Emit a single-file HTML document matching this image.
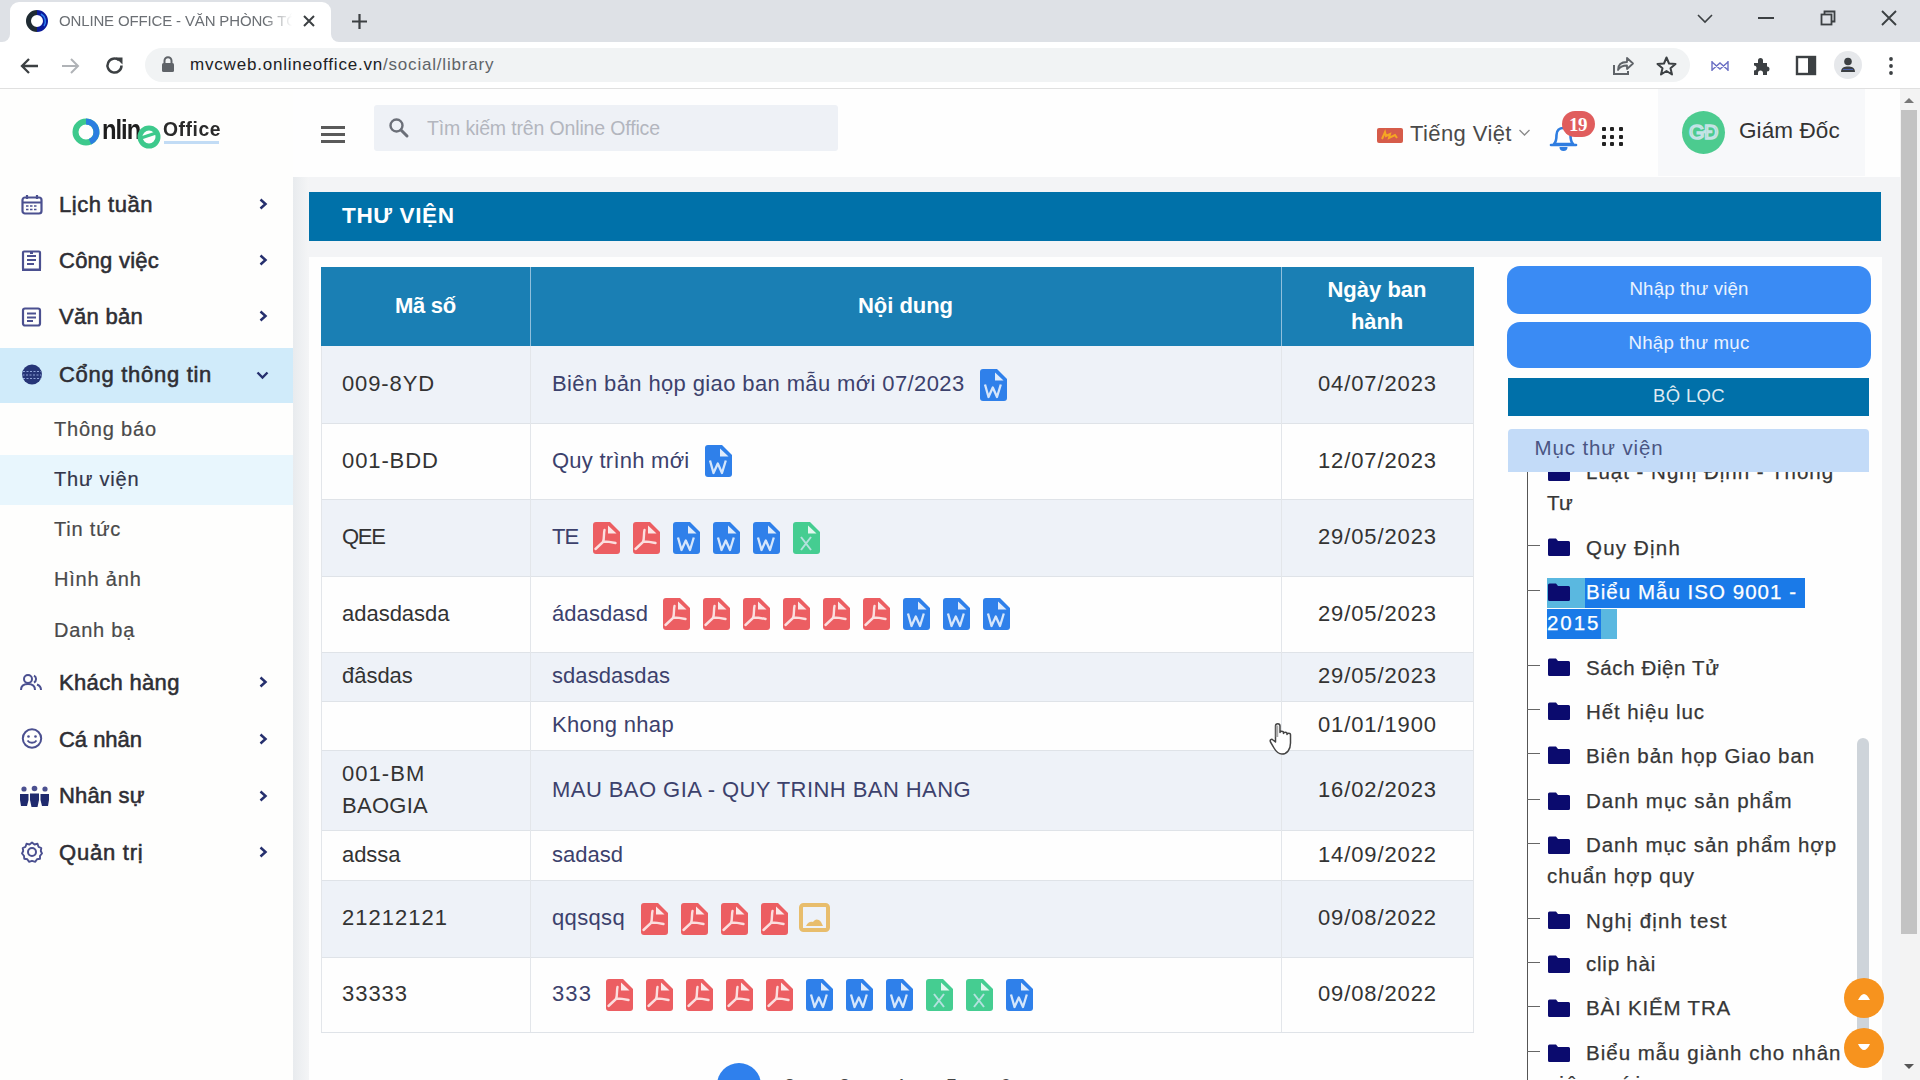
<!DOCTYPE html>
<html><head><meta charset="utf-8">
<style>
*{margin:0;padding:0;box-sizing:border-box}
html,body{width:1920px;height:1080px;overflow:hidden;background:#f3f4f6;font-family:"Liberation Sans",sans-serif}
.a{position:absolute}
.t{position:absolute;white-space:nowrap;line-height:1}
svg{overflow:visible}
</style></head><body>

<div class="a" style="left:0px;top:0px;width:1920px;height:42px;background:#dee1e6;"></div>
<div class="a" style="left:10px;top:2px;width:321px;height:40px;background:#fff;border-radius:9px 9px 0 0"></div>
<div class="a" style="left:2px;top:34px;width:8px;height:8px;background:#fff;"></div>
<div class="a" style="left:2px;top:34px;width:8px;height:8px;background:#dee1e6;border-bottom-right-radius:8px"></div>
<div class="a" style="left:331px;top:34px;width:8px;height:8px;background:#fff;"></div>
<div class="a" style="left:331px;top:34px;width:8px;height:8px;background:#dee1e6;border-bottom-left-radius:8px"></div>
<div class="a" style="left:0px;top:42px;width:1920px;height:46px;background:#fff;"></div>
<div class="a" style="left:0px;top:88px;width:1920px;height:1px;background:#e0e0e0;"></div>
<div class="a" style="left:145px;top:48px;width:1545px;height:34px;background:#f1f3f4;border-radius:17px"></div>
<!-- tab contents -->
<svg class="a" style="left:25px;top:9px" width="24" height="24" viewBox="0 0 24 24"><path d="M12 3.5A8.5 8.5 0 0 0 12 20.5" fill="none" stroke="#1f2b33" stroke-width="5"/><path d="M12 3.5A8.5 8.5 0 0 1 12 20.5" fill="none" stroke="#0b1a9a" stroke-width="5"/><path d="M16 5A8.5 8.5 0 0 1 19 17" fill="none" stroke="#2d7ff0" stroke-width="1.5"/></svg>
<div class="t" style="left:59px;top:13px;font-size:15px;color:#6b6f74;letter-spacing:-0.15px;width:233px;overflow:hidden;-webkit-mask-image:linear-gradient(90deg,#000 88%,transparent 100%)">ONLINE OFFICE - VĂN PHÒNG TỔNG HỢP</div>
<svg class="a" style="left:302px;top:14px" width="14" height="14" viewBox="0 0 14 14"><path d="M2 2L12 12M12 2L2 12" stroke="#3c4043" stroke-width="2"/></svg>
<svg class="a" style="left:351px;top:13px" width="17" height="17" viewBox="0 0 17 17"><path d="M8.5 1V16M1 8.5H16" stroke="#3c4043" stroke-width="2.2"/></svg>
<!-- window controls -->
<svg class="a" style="left:1696px;top:12px" width="18" height="12" viewBox="0 0 18 12"><path d="M2 3L9 10L16 3" fill="none" stroke="#3c4043" stroke-width="1.6"/></svg>
<div class="a" style="left:1758px;top:17px;width:16px;height:2px;background:#3c4043"></div>
<svg class="a" style="left:1819px;top:9px" width="18" height="18" viewBox="0 0 18 18"><rect x="2.5" y="5.5" width="10" height="10" fill="none" stroke="#3c4043" stroke-width="1.8"/><path d="M5.5 5.5V2.5H15.5V12.5H12.5" fill="none" stroke="#3c4043" stroke-width="1.8"/></svg>
<svg class="a" style="left:1880px;top:9px" width="18" height="18" viewBox="0 0 18 18"><path d="M2 2L16 16M16 2L2 16" stroke="#3c4043" stroke-width="1.9"/></svg>
<!-- nav -->
<svg class="a" style="left:18px;top:55px" width="22" height="22" viewBox="0 0 22 22"><path d="M20 11H4M11 4L4 11L11 18" fill="none" stroke="#3c4043" stroke-width="2.3"/></svg>
<svg class="a" style="left:60px;top:55px" width="22" height="22" viewBox="0 0 22 22"><path d="M2 11H18M11 4L18 11L11 18" fill="none" stroke="#b0b3b7" stroke-width="2"/></svg>
<svg class="a" style="left:103px;top:54px" width="23" height="23" viewBox="0 0 23 23"><path d="M18.5 11.5A7 7 0 1 1 16 6.2" fill="none" stroke="#3c4043" stroke-width="2.5"/><path d="M12.5 3.5H19.5V10.5Z" fill="#3c4043"/></svg>
<svg class="a" style="left:161px;top:56px" width="14" height="16" viewBox="0 0 14 16"><path d="M3.5 7V4.8A3.5 3.5 0 0 1 10.5 4.8V7" fill="none" stroke="#5f6368" stroke-width="2"/><rect x="1" y="7" width="12" height="9" rx="1.5" fill="#5f6368"/></svg>
<div class="t" style="left:190px;top:56px;font-size:17px;color:#202124;letter-spacing:0.8px">mvcweb.onlineoffice.vn<span style="color:#5f6368">/social/library</span></div>
<!-- right toolbar icons -->
<svg class="a" style="left:1612px;top:55px" width="24" height="22" viewBox="0 0 24 22"><path d="M2 10V19H16V16" fill="none" stroke="#5f6368" stroke-width="2"/><path d="M6 15C6 9 10 7 15 7V3L21 8.5L15 14V10.5C11 10.5 8 11.5 6 15Z" fill="none" stroke="#5f6368" stroke-width="1.8" stroke-linejoin="round"/></svg>
<svg class="a" style="left:1655px;top:55px" width="23" height="22" viewBox="0 0 23 22"><path d="M11.5 2.5L14 8.5L20.5 9L15.5 13.2L17 19.5L11.5 16L6 19.5L7.5 13.2L2.5 9L9 8.5Z" fill="none" stroke="#3c4043" stroke-width="2" stroke-linejoin="round"/></svg>
<svg class="a" style="left:1710px;top:59px" width="20" height="14" viewBox="0 0 20 14"><path d="M2 2V12M18 2V12M2 3L10 10L18 3M2 11L10 4L18 11" fill="none" stroke="#6b6fc4" stroke-width="1.4"/></svg>
<svg class="a" style="left:1751px;top:55px" width="24" height="22" viewBox="0 0 24 22"><path d="M3 8H7V5.5A2.5 2.5 0 0 1 12 5.5V8H16V11.5A2.5 2.5 0 0 1 16 16.5V20H12V18A2.5 2.5 0 0 0 7 18V20H3V15.5A2.5 2.5 0 0 0 3 10.5Z" fill="#3c4043"/></svg>
<svg class="a" style="left:1795px;top:55px" width="22" height="21" viewBox="0 0 22 21"><rect x="2" y="2" width="18" height="17" fill="none" stroke="#3c4043" stroke-width="2.4"/><rect x="13" y="2" width="7" height="17" fill="#3c4043"/></svg>
<div class="a" style="left:1834px;top:51px;width:28px;height:28px;border-radius:50%;background:#e6e8eb"></div>
<svg class="a" style="left:1838px;top:55px" width="20" height="20" viewBox="0 0 20 20"><circle cx="10" cy="6.5" r="3.8" fill="#3c4043"/><path d="M3 17C3 12.5 6.5 11.5 10 11.5S17 12.5 17 17Z" fill="#3c4043"/><path d="M5 14.5H15" stroke="#4a5fa8" stroke-width="1"/></svg>
<svg class="a" style="left:1887px;top:56px" width="8" height="20" viewBox="0 0 8 20"><circle cx="4" cy="3" r="1.9" fill="#3c4043"/><circle cx="4" cy="10" r="1.9" fill="#3c4043"/><circle cx="4" cy="17" r="1.9" fill="#3c4043"/></svg>


<div class="a" style="left:0px;top:89px;width:293px;height:991px;background:#fefefd;"></div>
<div class="a" style="left:293px;top:89px;width:1607px;height:88px;background:#fefefe;"></div>
<div class="a" style="left:293px;top:177px;width:16px;height:903px;background:#f1f2f4;background:linear-gradient(90deg,#e8ebee,#f4f5f6)"></div>
<div class="a" style="left:1658px;top:89px;width:207px;height:87px;background:#f7f8fa;"></div>
<div class="a" style="left:1900px;top:89px;width:20px;height:991px;background:#f3f3f3;"></div>
<div class="a" style="left:1901px;top:110px;width:16px;height:824px;background:#c3c3c3;"></div>
<svg class="a" style="left:1903px;top:95px" width="12" height="10" viewBox="0 0 12 10"><path d="M1 8L6 3L11 8Z" fill="#777"/></svg>
<svg class="a" style="left:1903px;top:1062px" width="12" height="10" viewBox="0 0 12 10"><path d="M1 2L6 7L11 2Z" fill="#555"/></svg>
<div class="a" style="left:309px;top:192px;width:1572px;height:49px;background:#0071a9;"></div>
<div class="a" style="left:309px;top:257px;width:1573px;height:823px;background:#fefefe;"></div>
<svg class="a" style="left:72px;top:118px" width="28" height="28" viewBox="0 0 28 28"><circle cx="14" cy="14" r="10.5" fill="none" stroke="#3dc98c" stroke-width="6"/><path d="M14 3.5A10.5 10.5 0 0 1 18 23.7" fill="none" stroke="#2a7ee0" stroke-width="6"/></svg>
<div class="t" style="left:102px;top:116.3px;font-size:28px;color:#1e1e1e;font-weight:bold;letter-spacing:-1.2px;transform:scaleX(0.85);transform-origin:left">nlin</div>
<svg class="a" style="left:137px;top:125px" width="24" height="24" viewBox="0 0 24 24"><circle cx="12" cy="12" r="9" fill="none" stroke="#3dc98c" stroke-width="5"/><path d="M4 13L19 8" stroke="#3dc98c" stroke-width="3"/></svg>
<div class="t" style="left:163px;top:118.2px;font-size:21px;color:#2a2a2a;font-weight:bold;letter-spacing:0.6px;transform:scaleX(0.92);transform-origin:left">Office</div>
<div class="a" style="left:164px;top:141px;width:55px;height:3px;background:#8fc0ee;opacity:.55"></div>
<div class="a" style="left:321px;top:126px;width:24px;height:3px;background:#5a5a5a;"></div>
<div class="a" style="left:321px;top:133px;width:24px;height:3px;background:#5a5a5a;"></div>
<div class="a" style="left:321px;top:140px;width:24px;height:3px;background:#5a5a5a;"></div>
<div class="a" style="left:374px;top:105px;width:464px;height:46px;background:#eef1f6;border-radius:3px"></div>
<svg class="a" style="left:388px;top:117px" width="22" height="22" viewBox="0 0 22 22"><circle cx="8.5" cy="8.5" r="6" fill="none" stroke="#6b6f78" stroke-width="2.4"/><path d="M13 13L19 19" stroke="#6b6f78" stroke-width="3" stroke-linecap="round"/></svg>
<div class="t" style="left:427px;top:118.5px;font-size:19.5px;color:#b3b6be;font-weight:normal;letter-spacing:-0.15px;">Tìm kiếm trên Online Office</div>
<div class="a" style="left:1377px;top:128px;width:26px;height:15px;background:#d65c4a;border-radius:2px"></div>
<svg class="a" style="left:1380px;top:130px" width="20" height="11" viewBox="0 0 20 11"><path d="M2 9L5 2L6 6L10 4L9 8L15 5L17 8" fill="none" stroke="#f5a623" stroke-width="2"/></svg>
<div class="t" style="left:1410px;top:123.4px;font-size:22px;color:#4a4a4a;font-weight:normal;letter-spacing:0.4px;">Tiếng Việt</div>
<svg class="a" style="left:1518px;top:128px" width="13" height="9" viewBox="0 0 13 9"><path d="M1.5 2L6.5 7L11.5 2" fill="none" stroke="#8a8a8a" stroke-width="1.3"/></svg>
<svg class="a" style="left:1549px;top:124px" width="30" height="28" viewBox="0 0 30 28"><path d="M5 20C7 18 7.5 15 7.5 11C7.5 6.5 10.5 4 14.5 4S21.5 6.5 21.5 11C21.5 15 22 18 24 20Z" fill="none" stroke="#2f7de0" stroke-width="2.6" stroke-linejoin="round"/><path d="M2 21H27" stroke="#2f7de0" stroke-width="2.6" stroke-linecap="round"/><path d="M10.5 23A4 4 0 0 0 18.5 23Z" fill="#2f7de0"/></svg>
<div class="a" style="left:1562px;top:111px;width:33px;height:26px;background:#e05d5d;border-radius:13px"></div>
<div class="t" style="left:1278px;width:600px;text-align:center;top:114.9px;font-size:19px;color:#fff;font-weight:bold;letter-spacing:-0.5px;font-family:'Liberation Serif'">19</div>
<div class="a" style="left:1601.5px;top:127.0px;width:4px;height:4px;background:#222;border-radius:1px"></div>
<div class="a" style="left:1610.0px;top:127.0px;width:4px;height:4px;background:#222;border-radius:1px"></div>
<div class="a" style="left:1618.5px;top:127.0px;width:4px;height:4px;background:#222;border-radius:1px"></div>
<div class="a" style="left:1601.5px;top:134.5px;width:4px;height:4px;background:#222;border-radius:1px"></div>
<div class="a" style="left:1610.0px;top:134.5px;width:4px;height:4px;background:#222;border-radius:1px"></div>
<div class="a" style="left:1618.5px;top:134.5px;width:4px;height:4px;background:#222;border-radius:1px"></div>
<div class="a" style="left:1601.5px;top:142.0px;width:4px;height:4px;background:#222;border-radius:1px"></div>
<div class="a" style="left:1610.0px;top:142.0px;width:4px;height:4px;background:#222;border-radius:1px"></div>
<div class="a" style="left:1618.5px;top:142.0px;width:4px;height:4px;background:#222;border-radius:1px"></div>
<div class="a" style="left:1682px;top:111px;width:43px;height:43px;border-radius:50%;background:#4ccb8f"></div>
<div class="t" style="left:1403.5px;width:600px;text-align:center;top:122.1px;font-size:20px;color:transparent;font-weight:normal;letter-spacing:-0.5px;-webkit-text-stroke:1.6px #c5e3e6">GĐ</div>
<div class="t" style="left:1739px;top:120.0px;font-size:22.5px;color:#333;font-weight:normal;letter-spacing:0.1px;">Giám Đốc</div>
<div class="a" style="left:0px;top:348px;width:293px;height:55px;background:#d0ebfa;"></div>
<div class="a" style="left:0px;top:455px;width:293px;height:50px;background:#e8f6fd;"></div>
<div class="t" style="left:59px;top:194.2px;font-size:22px;color:#2e2e34;font-weight:normal;letter-spacing:0.52px;-webkit-text-stroke:0.55px #2e2e34">Lịch tuần</div>
<svg class="a" style="left:21px;top:194px" width="22" height="22" viewBox="0 0 22 22"><rect x="1.5" y="3.5" width="19" height="16" rx="2.5" fill="none" stroke="#4b5090" stroke-width="2.2"/><path d="M1.5 8.5H20.5M6 1V5M16 1V5" stroke="#4b5090" stroke-width="2.2"/><path d="M5 12H17M5 15.5H17" stroke="#4b5090" stroke-width="1.6" stroke-dasharray="2.5 1.5"/></svg>
<svg class="a" style="left:259px;top:198px" width="9" height="12" viewBox="0 0 9 12"><path d="M1.5 1.5L6.5 6L1.5 10.5" fill="none" stroke="#26306e" stroke-width="2.5"/></svg>
<div class="t" style="left:59px;top:249.9px;font-size:22px;color:#2e2e34;font-weight:normal;letter-spacing:0.24px;-webkit-text-stroke:0.55px #2e2e34">Công việc</div>
<svg class="a" style="left:21px;top:250px" width="22" height="22" viewBox="0 0 22 22"><rect x="2" y="1.5" width="17" height="18" rx="1" fill="none" stroke="#4b5090" stroke-width="2.2"/><path d="M6 6H15M6 10H15M6 14H13M1 20H20" stroke="#4b5090" stroke-width="1.8"/><path d="M9 3H12" stroke="#4b5090" stroke-width="2"/></svg>
<svg class="a" style="left:259px;top:254px" width="9" height="12" viewBox="0 0 9 12"><path d="M1.5 1.5L6.5 6L1.5 10.5" fill="none" stroke="#26306e" stroke-width="2.5"/></svg>
<div class="t" style="left:59px;top:306.0px;font-size:22px;color:#2e2e34;font-weight:normal;letter-spacing:0.29px;-webkit-text-stroke:0.55px #2e2e34">Văn bản</div>
<svg class="a" style="left:21px;top:307px" width="22" height="22" viewBox="0 0 22 22"><rect x="2" y="1.5" width="17" height="17" rx="2" fill="none" stroke="#4b5090" stroke-width="2.2"/><path d="M6 6.5H15M6 10.5H15M6 14H12" stroke="#4b5090" stroke-width="2"/></svg>
<svg class="a" style="left:259px;top:310px" width="9" height="12" viewBox="0 0 9 12"><path d="M1.5 1.5L6.5 6L1.5 10.5" fill="none" stroke="#26306e" stroke-width="2.5"/></svg>
<div class="t" style="left:59px;top:363.9px;font-size:22px;color:#2e2e34;font-weight:normal;letter-spacing:0.71px;-webkit-text-stroke:0.55px #2e2e34">Cổng thông tin</div>
<svg class="a" style="left:21px;top:364px" width="22" height="22" viewBox="0 0 22 22"><circle cx="11" cy="10.5" r="10" fill="#263577"/><path d="M2 7.5H20M1.5 11H20.5M2 14.5H20" stroke="#8fa3d8" stroke-width="1" stroke-dasharray="2 1.5"/><path d="M11 1V20" stroke="#263577" stroke-width="0"/>#4b5090#4b5090</svg>
<svg class="a" style="left:256px;top:371px" width="13" height="9" viewBox="0 0 13 9"><path d="M1.5 1.5L6.5 6.5L11.5 1.5" fill="none" stroke="#26306e" stroke-width="2.4"/></svg>
<div class="t" style="left:59px;top:672.0px;font-size:22px;color:#2e2e34;font-weight:normal;letter-spacing:0.33px;-webkit-text-stroke:0.55px #2e2e34">Khách hàng</div>
<svg class="a" style="left:20px;top:673px" width="22" height="22" viewBox="0 0 22 22"><circle cx="8" cy="6" r="4" fill="none" stroke="#4b5090" stroke-width="2"/><path d="M1 17C1 12.5 4 11 8 11S15 12.5 15 17" fill="none" stroke="#4b5090" stroke-width="2"/><path d="M14 2.5A4 4 0 0 1 14 9.5M17 11.5C19.5 12.5 21 14 21 17" fill="none" stroke="#4b5090" stroke-width="2"/></svg>
<svg class="a" style="left:259px;top:676px" width="9" height="12" viewBox="0 0 9 12"><path d="M1.5 1.5L6.5 6L1.5 10.5" fill="none" stroke="#26306e" stroke-width="2.5"/></svg>
<div class="t" style="left:59px;top:729.0px;font-size:22px;color:#2e2e34;font-weight:normal;letter-spacing:-0.03px;-webkit-text-stroke:0.55px #2e2e34">Cá nhân</div>
<svg class="a" style="left:21px;top:728px" width="22" height="22" viewBox="0 0 22 22"><circle cx="11" cy="10.5" r="9.2" fill="none" stroke="#4b5090" stroke-width="2"/><circle cx="7.5" cy="8.5" r="1.3" fill="#4b5090"/><circle cx="14.5" cy="8.5" r="1.3" fill="#4b5090"/><path d="M6.5 12.5C8.5 15.5 13.5 15.5 15.5 12.5" fill="none" stroke="#4b5090" stroke-width="1.8"/></svg>
<svg class="a" style="left:259px;top:733px" width="9" height="12" viewBox="0 0 9 12"><path d="M1.5 1.5L6.5 6L1.5 10.5" fill="none" stroke="#26306e" stroke-width="2.5"/></svg>
<div class="t" style="left:59px;top:785.4px;font-size:22px;color:#2e2e34;font-weight:normal;letter-spacing:0.17px;-webkit-text-stroke:0.55px #2e2e34">Nhân sự</div>
<svg class="a" style="left:19px;top:785px" width="22" height="22" viewBox="0 0 22 22"><circle cx="5" cy="4" r="2.6" fill="#4b5090"/><circle cx="15.5" cy="3.5" r="2.8" fill="#4b5090"/><circle cx="26" cy="4" r="2.6" fill="#4b5090"/><path d="M1 9H9.5V15L8 21H2L1 15Z M11 8.5H20V15L18.5 22H12.5L11 15Z M21.5 9H30V15L29 21H23L21.5 15Z" fill="#1f2a6e"/></svg>
<svg class="a" style="left:259px;top:790px" width="9" height="12" viewBox="0 0 9 12"><path d="M1.5 1.5L6.5 6L1.5 10.5" fill="none" stroke="#26306e" stroke-width="2.5"/></svg>
<div class="t" style="left:59px;top:841.8px;font-size:22px;color:#2e2e34;font-weight:normal;letter-spacing:0.77px;-webkit-text-stroke:0.55px #2e2e34">Quản trị</div>
<svg class="a" style="left:21px;top:841px" width="22" height="22" viewBox="0 0 22 22"><circle cx="11" cy="11" r="4" fill="none" stroke="#4b5090" stroke-width="2"/><path d="M11 1.5L13.5 3.5L16.5 2.8L17.5 5.8L20.3 7L19.8 10L21 12.5L19 14.8L19 17.8L16 18.3L14.3 20.8L11 19.8L8 20.8L6.3 18.3L3.3 17.8L3 14.8L1 12.5L2.2 10L1.7 7L4.5 5.8L5.5 2.8L8.5 3.5Z" fill="none" stroke="#4b5090" stroke-width="1.9" stroke-linejoin="round"/></svg>
<svg class="a" style="left:259px;top:846px" width="9" height="12" viewBox="0 0 9 12"><path d="M1.5 1.5L6.5 6L1.5 10.5" fill="none" stroke="#26306e" stroke-width="2.5"/></svg>
<div class="t" style="left:54px;top:419.1px;font-size:20px;color:#4a4a4a;font-weight:normal;letter-spacing:0.8px;-webkit-text-stroke:0.2px #4a4a4a">Thông báo</div>
<div class="t" style="left:54px;top:469.4px;font-size:20px;color:#33364a;font-weight:normal;letter-spacing:0.8px;-webkit-text-stroke:0.2px #33364a">Thư viện</div>
<div class="t" style="left:54px;top:519.1px;font-size:20px;color:#4a4a4a;font-weight:normal;letter-spacing:0.8px;-webkit-text-stroke:0.2px #4a4a4a">Tin tức</div>
<div class="t" style="left:54px;top:569.1px;font-size:20px;color:#4a4a4a;font-weight:normal;letter-spacing:0.8px;-webkit-text-stroke:0.2px #4a4a4a">Hình ảnh</div>
<div class="t" style="left:54px;top:619.5px;font-size:20px;color:#4a4a4a;font-weight:normal;letter-spacing:0.8px;-webkit-text-stroke:0.2px #4a4a4a">Danh bạ</div>
<div class="t" style="left:342px;top:204.7px;font-size:22.6px;color:#fff;font-weight:bold;letter-spacing:0.6px;">THƯ VIỆN</div>
<div class="a" style="left:321px;top:267px;width:1153px;height:79px;background:#1a7fb4;"></div>
<div class="a" style="left:530px;top:267px;width:1px;height:79px;background:#8fbfdc;"></div>
<div class="a" style="left:1281px;top:267px;width:1px;height:79px;background:#8fbfdc;"></div>
<div class="t" style="left:25.5px;width:800px;text-align:center;top:295.4px;font-size:22px;color:#fff;font-weight:bold;letter-spacing:-0.27px;">Mã số</div>
<div class="t" style="left:505.5px;width:800px;text-align:center;top:295.4px;font-size:22px;color:#fff;font-weight:bold;letter-spacing:-0.04px;">Nội dung</div>
<div class="t" style="left:977px;width:800px;text-align:center;top:279.2px;font-size:22px;color:#fff;font-weight:bold;letter-spacing:-0.00px;">Ngày ban</div>
<div class="t" style="left:977px;width:800px;text-align:center;top:311.4px;font-size:22px;color:#fff;font-weight:bold;letter-spacing:-0.14px;">hành</div>
<div class="a" style="left:321px;top:346px;width:1153px;height:77px;background:#eef2f8;"></div>
<div class="a" style="left:321px;top:423px;width:1153px;height:76px;background:#fefefe;"></div>
<div class="a" style="left:321px;top:423px;width:1153px;height:1px;background:#dfe3e8;"></div>
<div class="a" style="left:321px;top:499px;width:1153px;height:77px;background:#eef2f8;"></div>
<div class="a" style="left:321px;top:499px;width:1153px;height:1px;background:#dfe3e8;"></div>
<div class="a" style="left:321px;top:576px;width:1153px;height:76px;background:#fefefe;"></div>
<div class="a" style="left:321px;top:576px;width:1153px;height:1px;background:#dfe3e8;"></div>
<div class="a" style="left:321px;top:652px;width:1153px;height:49px;background:#eef2f8;"></div>
<div class="a" style="left:321px;top:652px;width:1153px;height:1px;background:#dfe3e8;"></div>
<div class="a" style="left:321px;top:701px;width:1153px;height:49px;background:#fefefe;"></div>
<div class="a" style="left:321px;top:701px;width:1153px;height:1px;background:#dfe3e8;"></div>
<div class="a" style="left:321px;top:750px;width:1153px;height:80px;background:#eef2f8;"></div>
<div class="a" style="left:321px;top:750px;width:1153px;height:1px;background:#dfe3e8;"></div>
<div class="a" style="left:321px;top:830px;width:1153px;height:50px;background:#fefefe;"></div>
<div class="a" style="left:321px;top:830px;width:1153px;height:1px;background:#dfe3e8;"></div>
<div class="a" style="left:321px;top:880px;width:1153px;height:77px;background:#eef2f8;"></div>
<div class="a" style="left:321px;top:880px;width:1153px;height:1px;background:#dfe3e8;"></div>
<div class="a" style="left:321px;top:957px;width:1153px;height:75px;background:#fefefe;"></div>
<div class="a" style="left:321px;top:957px;width:1153px;height:1px;background:#dfe3e8;"></div>
<div class="a" style="left:321px;top:1032px;width:1153px;height:1px;background:#dfe3e8;"></div>
<div class="a" style="left:321px;top:346px;width:1px;height:686px;background:#e3e6ea;"></div>
<div class="a" style="left:1473px;top:346px;width:1px;height:686px;background:#e3e6ea;"></div>
<div class="a" style="left:530px;top:346px;width:1px;height:686px;background:#e3e6ea;"></div>
<div class="a" style="left:1281px;top:346px;width:1px;height:686px;background:#e3e6ea;"></div>
<div class="t" style="left:342px;top:373.4px;font-size:22px;color:#333;font-weight:normal;letter-spacing:0.88px;">009-8YD</div>
<div class="t" style="left:552px;top:373.4px;font-size:22px;color:#3c416c;font-weight:normal;letter-spacing:0.38px;">Biên bản họp giao ban mẫu mới 07/2023</div>
<div class="t" style="left:977.5px;width:800px;text-align:center;top:373.4px;font-size:22px;color:#333;font-weight:normal;letter-spacing:0.89px;">04/07/2023</div>
<svg class="a" style="left:980px;top:368.5px" width="27" height="32" viewBox="0 0 27 32"><path d="M3 0H17L27 10V29A3 3 0 0 1 24 32H3A3 3 0 0 1 0 29V3A3 3 0 0 1 3 0Z" fill="#2f80ea"/><path d="M15 3.5V11.5H23.5Z" fill="#fff" opacity=".85"/><path d="M5 15.5L8.5 28L12.8 18.5L17 28L20.8 15.5" fill="none" stroke="#fff" stroke-width="2.3" stroke-linejoin="round" opacity=".8"/></svg>
<div class="t" style="left:342px;top:449.9px;font-size:22px;color:#333;font-weight:normal;letter-spacing:0.89px;">001-BDD</div>
<div class="t" style="left:552px;top:449.9px;font-size:22px;color:#3c416c;font-weight:normal;letter-spacing:0.25px;">Quy trình mới</div>
<div class="t" style="left:977.5px;width:800px;text-align:center;top:449.9px;font-size:22px;color:#333;font-weight:normal;letter-spacing:0.89px;">12/07/2023</div>
<svg class="a" style="left:705px;top:445.0px" width="27" height="32" viewBox="0 0 27 32"><path d="M3 0H17L27 10V29A3 3 0 0 1 24 32H3A3 3 0 0 1 0 29V3A3 3 0 0 1 3 0Z" fill="#2f80ea"/><path d="M15 3.5V11.5H23.5Z" fill="#fff" opacity=".85"/><path d="M5 15.5L8.5 28L12.8 18.5L17 28L20.8 15.5" fill="none" stroke="#fff" stroke-width="2.3" stroke-linejoin="round" opacity=".8"/></svg>
<div class="t" style="left:342px;top:526.4px;font-size:22px;color:#333;font-weight:normal;letter-spacing:-1.29px;">QEE</div>
<div class="t" style="left:552px;top:526.4px;font-size:22px;color:#3c416c;font-weight:normal;letter-spacing:-1.06px;">TE</div>
<div class="t" style="left:977.5px;width:800px;text-align:center;top:526.4px;font-size:22px;color:#333;font-weight:normal;letter-spacing:0.89px;">29/05/2023</div>
<svg class="a" style="left:593px;top:521.5px" width="27" height="32" viewBox="0 0 27 32"><path d="M3 0H17L27 10V29A3 3 0 0 1 24 32H3A3 3 0 0 1 0 29V3A3 3 0 0 1 3 0Z" fill="#ec5e62"/><path d="M15 3.5V11.5H23.5Z" fill="#fff" opacity=".85"/><path d="M11.5 8C10.5 12 11.5 16.5 10 20L2.5 27M10.5 19.5C14 19.5 18 20 22.5 21" fill="none" stroke="#fff" stroke-width="2.4" stroke-linecap="round" opacity=".8"/></svg>
<svg class="a" style="left:633px;top:521.5px" width="27" height="32" viewBox="0 0 27 32"><path d="M3 0H17L27 10V29A3 3 0 0 1 24 32H3A3 3 0 0 1 0 29V3A3 3 0 0 1 3 0Z" fill="#ec5e62"/><path d="M15 3.5V11.5H23.5Z" fill="#fff" opacity=".85"/><path d="M11.5 8C10.5 12 11.5 16.5 10 20L2.5 27M10.5 19.5C14 19.5 18 20 22.5 21" fill="none" stroke="#fff" stroke-width="2.4" stroke-linecap="round" opacity=".8"/></svg>
<svg class="a" style="left:673px;top:521.5px" width="27" height="32" viewBox="0 0 27 32"><path d="M3 0H17L27 10V29A3 3 0 0 1 24 32H3A3 3 0 0 1 0 29V3A3 3 0 0 1 3 0Z" fill="#2f80ea"/><path d="M15 3.5V11.5H23.5Z" fill="#fff" opacity=".85"/><path d="M5 15.5L8.5 28L12.8 18.5L17 28L20.8 15.5" fill="none" stroke="#fff" stroke-width="2.3" stroke-linejoin="round" opacity=".8"/></svg>
<svg class="a" style="left:713px;top:521.5px" width="27" height="32" viewBox="0 0 27 32"><path d="M3 0H17L27 10V29A3 3 0 0 1 24 32H3A3 3 0 0 1 0 29V3A3 3 0 0 1 3 0Z" fill="#2f80ea"/><path d="M15 3.5V11.5H23.5Z" fill="#fff" opacity=".85"/><path d="M5 15.5L8.5 28L12.8 18.5L17 28L20.8 15.5" fill="none" stroke="#fff" stroke-width="2.3" stroke-linejoin="round" opacity=".8"/></svg>
<svg class="a" style="left:753px;top:521.5px" width="27" height="32" viewBox="0 0 27 32"><path d="M3 0H17L27 10V29A3 3 0 0 1 24 32H3A3 3 0 0 1 0 29V3A3 3 0 0 1 3 0Z" fill="#2f80ea"/><path d="M15 3.5V11.5H23.5Z" fill="#fff" opacity=".85"/><path d="M5 15.5L8.5 28L12.8 18.5L17 28L20.8 15.5" fill="none" stroke="#fff" stroke-width="2.3" stroke-linejoin="round" opacity=".8"/></svg>
<svg class="a" style="left:793px;top:521.5px" width="27" height="32" viewBox="0 0 27 32"><path d="M3 0H17L27 10V29A3 3 0 0 1 24 32H3A3 3 0 0 1 0 29V3A3 3 0 0 1 3 0Z" fill="#45cd91"/><path d="M15 3.5V11.5H23.5Z" fill="#fff" opacity=".85"/><path d="M8 15L18 28M18 15L8 28" stroke="#cfe6f2" stroke-width="2" opacity=".8"/></svg>
<div class="t" style="left:342px;top:602.9px;font-size:22px;color:#333;font-weight:normal;letter-spacing:-0.02px;">adasdasda</div>
<div class="t" style="left:552px;top:602.9px;font-size:22px;color:#3c416c;font-weight:normal;letter-spacing:0.07px;">ádasdasd</div>
<div class="t" style="left:977.5px;width:800px;text-align:center;top:602.9px;font-size:22px;color:#333;font-weight:normal;letter-spacing:0.89px;">29/05/2023</div>
<svg class="a" style="left:662.5px;top:598.0px" width="27" height="32" viewBox="0 0 27 32"><path d="M3 0H17L27 10V29A3 3 0 0 1 24 32H3A3 3 0 0 1 0 29V3A3 3 0 0 1 3 0Z" fill="#ec5e62"/><path d="M15 3.5V11.5H23.5Z" fill="#fff" opacity=".85"/><path d="M11.5 8C10.5 12 11.5 16.5 10 20L2.5 27M10.5 19.5C14 19.5 18 20 22.5 21" fill="none" stroke="#fff" stroke-width="2.4" stroke-linecap="round" opacity=".8"/></svg>
<svg class="a" style="left:702.5px;top:598.0px" width="27" height="32" viewBox="0 0 27 32"><path d="M3 0H17L27 10V29A3 3 0 0 1 24 32H3A3 3 0 0 1 0 29V3A3 3 0 0 1 3 0Z" fill="#ec5e62"/><path d="M15 3.5V11.5H23.5Z" fill="#fff" opacity=".85"/><path d="M11.5 8C10.5 12 11.5 16.5 10 20L2.5 27M10.5 19.5C14 19.5 18 20 22.5 21" fill="none" stroke="#fff" stroke-width="2.4" stroke-linecap="round" opacity=".8"/></svg>
<svg class="a" style="left:742.5px;top:598.0px" width="27" height="32" viewBox="0 0 27 32"><path d="M3 0H17L27 10V29A3 3 0 0 1 24 32H3A3 3 0 0 1 0 29V3A3 3 0 0 1 3 0Z" fill="#ec5e62"/><path d="M15 3.5V11.5H23.5Z" fill="#fff" opacity=".85"/><path d="M11.5 8C10.5 12 11.5 16.5 10 20L2.5 27M10.5 19.5C14 19.5 18 20 22.5 21" fill="none" stroke="#fff" stroke-width="2.4" stroke-linecap="round" opacity=".8"/></svg>
<svg class="a" style="left:782.5px;top:598.0px" width="27" height="32" viewBox="0 0 27 32"><path d="M3 0H17L27 10V29A3 3 0 0 1 24 32H3A3 3 0 0 1 0 29V3A3 3 0 0 1 3 0Z" fill="#ec5e62"/><path d="M15 3.5V11.5H23.5Z" fill="#fff" opacity=".85"/><path d="M11.5 8C10.5 12 11.5 16.5 10 20L2.5 27M10.5 19.5C14 19.5 18 20 22.5 21" fill="none" stroke="#fff" stroke-width="2.4" stroke-linecap="round" opacity=".8"/></svg>
<svg class="a" style="left:822.5px;top:598.0px" width="27" height="32" viewBox="0 0 27 32"><path d="M3 0H17L27 10V29A3 3 0 0 1 24 32H3A3 3 0 0 1 0 29V3A3 3 0 0 1 3 0Z" fill="#ec5e62"/><path d="M15 3.5V11.5H23.5Z" fill="#fff" opacity=".85"/><path d="M11.5 8C10.5 12 11.5 16.5 10 20L2.5 27M10.5 19.5C14 19.5 18 20 22.5 21" fill="none" stroke="#fff" stroke-width="2.4" stroke-linecap="round" opacity=".8"/></svg>
<svg class="a" style="left:862.5px;top:598.0px" width="27" height="32" viewBox="0 0 27 32"><path d="M3 0H17L27 10V29A3 3 0 0 1 24 32H3A3 3 0 0 1 0 29V3A3 3 0 0 1 3 0Z" fill="#ec5e62"/><path d="M15 3.5V11.5H23.5Z" fill="#fff" opacity=".85"/><path d="M11.5 8C10.5 12 11.5 16.5 10 20L2.5 27M10.5 19.5C14 19.5 18 20 22.5 21" fill="none" stroke="#fff" stroke-width="2.4" stroke-linecap="round" opacity=".8"/></svg>
<svg class="a" style="left:902.5px;top:598.0px" width="27" height="32" viewBox="0 0 27 32"><path d="M3 0H17L27 10V29A3 3 0 0 1 24 32H3A3 3 0 0 1 0 29V3A3 3 0 0 1 3 0Z" fill="#2f80ea"/><path d="M15 3.5V11.5H23.5Z" fill="#fff" opacity=".85"/><path d="M5 15.5L8.5 28L12.8 18.5L17 28L20.8 15.5" fill="none" stroke="#fff" stroke-width="2.3" stroke-linejoin="round" opacity=".8"/></svg>
<svg class="a" style="left:942.5px;top:598.0px" width="27" height="32" viewBox="0 0 27 32"><path d="M3 0H17L27 10V29A3 3 0 0 1 24 32H3A3 3 0 0 1 0 29V3A3 3 0 0 1 3 0Z" fill="#2f80ea"/><path d="M15 3.5V11.5H23.5Z" fill="#fff" opacity=".85"/><path d="M5 15.5L8.5 28L12.8 18.5L17 28L20.8 15.5" fill="none" stroke="#fff" stroke-width="2.3" stroke-linejoin="round" opacity=".8"/></svg>
<svg class="a" style="left:982.5px;top:598.0px" width="27" height="32" viewBox="0 0 27 32"><path d="M3 0H17L27 10V29A3 3 0 0 1 24 32H3A3 3 0 0 1 0 29V3A3 3 0 0 1 3 0Z" fill="#2f80ea"/><path d="M15 3.5V11.5H23.5Z" fill="#fff" opacity=".85"/><path d="M5 15.5L8.5 28L12.8 18.5L17 28L20.8 15.5" fill="none" stroke="#fff" stroke-width="2.3" stroke-linejoin="round" opacity=".8"/></svg>
<div class="t" style="left:342px;top:665.4px;font-size:22px;color:#333;font-weight:normal;letter-spacing:-0.03px;">đâsdas</div>
<div class="t" style="left:552px;top:665.4px;font-size:22px;color:#3c416c;font-weight:normal;letter-spacing:0.06px;">sdasdasdas</div>
<div class="t" style="left:977.5px;width:800px;text-align:center;top:665.4px;font-size:22px;color:#333;font-weight:normal;letter-spacing:0.89px;">29/05/2023</div>
<div class="t" style="left:552px;top:714.4px;font-size:22px;color:#3c416c;font-weight:normal;letter-spacing:0.33px;">Khong nhap</div>
<div class="t" style="left:977.5px;width:800px;text-align:center;top:714.4px;font-size:22px;color:#333;font-weight:normal;letter-spacing:0.89px;">01/01/1900</div>
<div class="t" style="left:342px;top:763.4px;font-size:22px;color:#333;font-weight:normal;letter-spacing:1.04px;">001-BM</div>
<div class="t" style="left:342px;top:794.7px;font-size:22px;color:#333;font-weight:normal;letter-spacing:0.27px;">BAOGIA</div>
<div class="t" style="left:552px;top:778.9px;font-size:22px;color:#3c416c;font-weight:normal;letter-spacing:0.44px;">MAU BAO GIA - QUY TRINH BAN HANG</div>
<div class="t" style="left:977.5px;width:800px;text-align:center;top:778.9px;font-size:22px;color:#333;font-weight:normal;letter-spacing:0.89px;">16/02/2023</div>
<div class="t" style="left:342px;top:843.9px;font-size:22px;color:#333;font-weight:normal;letter-spacing:-0.08px;">adssa</div>
<div class="t" style="left:552px;top:843.9px;font-size:22px;color:#3c416c;font-weight:normal;letter-spacing:0.01px;">sadasd</div>
<div class="t" style="left:977.5px;width:800px;text-align:center;top:843.9px;font-size:22px;color:#333;font-weight:normal;letter-spacing:0.89px;">14/09/2022</div>
<div class="t" style="left:342px;top:907.4px;font-size:22px;color:#333;font-weight:normal;letter-spacing:1.01px;">21212121</div>
<div class="t" style="left:552px;top:907.4px;font-size:22px;color:#3c416c;font-weight:normal;letter-spacing:0.34px;">qqsqsq</div>
<div class="t" style="left:977.5px;width:800px;text-align:center;top:907.4px;font-size:22px;color:#333;font-weight:normal;letter-spacing:0.89px;">09/08/2022</div>
<svg class="a" style="left:641px;top:902.5px" width="27" height="32" viewBox="0 0 27 32"><path d="M3 0H17L27 10V29A3 3 0 0 1 24 32H3A3 3 0 0 1 0 29V3A3 3 0 0 1 3 0Z" fill="#ec5e62"/><path d="M15 3.5V11.5H23.5Z" fill="#fff" opacity=".85"/><path d="M11.5 8C10.5 12 11.5 16.5 10 20L2.5 27M10.5 19.5C14 19.5 18 20 22.5 21" fill="none" stroke="#fff" stroke-width="2.4" stroke-linecap="round" opacity=".8"/></svg>
<svg class="a" style="left:681px;top:902.5px" width="27" height="32" viewBox="0 0 27 32"><path d="M3 0H17L27 10V29A3 3 0 0 1 24 32H3A3 3 0 0 1 0 29V3A3 3 0 0 1 3 0Z" fill="#ec5e62"/><path d="M15 3.5V11.5H23.5Z" fill="#fff" opacity=".85"/><path d="M11.5 8C10.5 12 11.5 16.5 10 20L2.5 27M10.5 19.5C14 19.5 18 20 22.5 21" fill="none" stroke="#fff" stroke-width="2.4" stroke-linecap="round" opacity=".8"/></svg>
<svg class="a" style="left:721px;top:902.5px" width="27" height="32" viewBox="0 0 27 32"><path d="M3 0H17L27 10V29A3 3 0 0 1 24 32H3A3 3 0 0 1 0 29V3A3 3 0 0 1 3 0Z" fill="#ec5e62"/><path d="M15 3.5V11.5H23.5Z" fill="#fff" opacity=".85"/><path d="M11.5 8C10.5 12 11.5 16.5 10 20L2.5 27M10.5 19.5C14 19.5 18 20 22.5 21" fill="none" stroke="#fff" stroke-width="2.4" stroke-linecap="round" opacity=".8"/></svg>
<svg class="a" style="left:761px;top:902.5px" width="27" height="32" viewBox="0 0 27 32"><path d="M3 0H17L27 10V29A3 3 0 0 1 24 32H3A3 3 0 0 1 0 29V3A3 3 0 0 1 3 0Z" fill="#ec5e62"/><path d="M15 3.5V11.5H23.5Z" fill="#fff" opacity=".85"/><path d="M11.5 8C10.5 12 11.5 16.5 10 20L2.5 27M10.5 19.5C14 19.5 18 20 22.5 21" fill="none" stroke="#fff" stroke-width="2.4" stroke-linecap="round" opacity=".8"/></svg>
<svg class="a" style="left:799px;top:902.5px" width="31" height="30" viewBox="0 0 31 30"><rect x="2" y="2" width="27" height="25" rx="2.5" fill="none" stroke="#e8bd6c" stroke-width="4"/><path d="M7 23C9 19 11 18.5 14 19C16 16 19 15.5 22 19L24 23Z" fill="#e8bd6c"/></svg>
<div class="t" style="left:342px;top:983.4px;font-size:22px;color:#333;font-weight:normal;letter-spacing:0.96px;">33333</div>
<div class="t" style="left:552px;top:983.4px;font-size:22px;color:#3c416c;font-weight:normal;letter-spacing:1.09px;">333</div>
<div class="t" style="left:977.5px;width:800px;text-align:center;top:983.4px;font-size:22px;color:#333;font-weight:normal;letter-spacing:0.89px;">09/08/2022</div>
<svg class="a" style="left:606px;top:978.5px" width="27" height="32" viewBox="0 0 27 32"><path d="M3 0H17L27 10V29A3 3 0 0 1 24 32H3A3 3 0 0 1 0 29V3A3 3 0 0 1 3 0Z" fill="#ec5e62"/><path d="M15 3.5V11.5H23.5Z" fill="#fff" opacity=".85"/><path d="M11.5 8C10.5 12 11.5 16.5 10 20L2.5 27M10.5 19.5C14 19.5 18 20 22.5 21" fill="none" stroke="#fff" stroke-width="2.4" stroke-linecap="round" opacity=".8"/></svg>
<svg class="a" style="left:646px;top:978.5px" width="27" height="32" viewBox="0 0 27 32"><path d="M3 0H17L27 10V29A3 3 0 0 1 24 32H3A3 3 0 0 1 0 29V3A3 3 0 0 1 3 0Z" fill="#ec5e62"/><path d="M15 3.5V11.5H23.5Z" fill="#fff" opacity=".85"/><path d="M11.5 8C10.5 12 11.5 16.5 10 20L2.5 27M10.5 19.5C14 19.5 18 20 22.5 21" fill="none" stroke="#fff" stroke-width="2.4" stroke-linecap="round" opacity=".8"/></svg>
<svg class="a" style="left:686px;top:978.5px" width="27" height="32" viewBox="0 0 27 32"><path d="M3 0H17L27 10V29A3 3 0 0 1 24 32H3A3 3 0 0 1 0 29V3A3 3 0 0 1 3 0Z" fill="#ec5e62"/><path d="M15 3.5V11.5H23.5Z" fill="#fff" opacity=".85"/><path d="M11.5 8C10.5 12 11.5 16.5 10 20L2.5 27M10.5 19.5C14 19.5 18 20 22.5 21" fill="none" stroke="#fff" stroke-width="2.4" stroke-linecap="round" opacity=".8"/></svg>
<svg class="a" style="left:726px;top:978.5px" width="27" height="32" viewBox="0 0 27 32"><path d="M3 0H17L27 10V29A3 3 0 0 1 24 32H3A3 3 0 0 1 0 29V3A3 3 0 0 1 3 0Z" fill="#ec5e62"/><path d="M15 3.5V11.5H23.5Z" fill="#fff" opacity=".85"/><path d="M11.5 8C10.5 12 11.5 16.5 10 20L2.5 27M10.5 19.5C14 19.5 18 20 22.5 21" fill="none" stroke="#fff" stroke-width="2.4" stroke-linecap="round" opacity=".8"/></svg>
<svg class="a" style="left:766px;top:978.5px" width="27" height="32" viewBox="0 0 27 32"><path d="M3 0H17L27 10V29A3 3 0 0 1 24 32H3A3 3 0 0 1 0 29V3A3 3 0 0 1 3 0Z" fill="#ec5e62"/><path d="M15 3.5V11.5H23.5Z" fill="#fff" opacity=".85"/><path d="M11.5 8C10.5 12 11.5 16.5 10 20L2.5 27M10.5 19.5C14 19.5 18 20 22.5 21" fill="none" stroke="#fff" stroke-width="2.4" stroke-linecap="round" opacity=".8"/></svg>
<svg class="a" style="left:806px;top:978.5px" width="27" height="32" viewBox="0 0 27 32"><path d="M3 0H17L27 10V29A3 3 0 0 1 24 32H3A3 3 0 0 1 0 29V3A3 3 0 0 1 3 0Z" fill="#2f80ea"/><path d="M15 3.5V11.5H23.5Z" fill="#fff" opacity=".85"/><path d="M5 15.5L8.5 28L12.8 18.5L17 28L20.8 15.5" fill="none" stroke="#fff" stroke-width="2.3" stroke-linejoin="round" opacity=".8"/></svg>
<svg class="a" style="left:846px;top:978.5px" width="27" height="32" viewBox="0 0 27 32"><path d="M3 0H17L27 10V29A3 3 0 0 1 24 32H3A3 3 0 0 1 0 29V3A3 3 0 0 1 3 0Z" fill="#2f80ea"/><path d="M15 3.5V11.5H23.5Z" fill="#fff" opacity=".85"/><path d="M5 15.5L8.5 28L12.8 18.5L17 28L20.8 15.5" fill="none" stroke="#fff" stroke-width="2.3" stroke-linejoin="round" opacity=".8"/></svg>
<svg class="a" style="left:886px;top:978.5px" width="27" height="32" viewBox="0 0 27 32"><path d="M3 0H17L27 10V29A3 3 0 0 1 24 32H3A3 3 0 0 1 0 29V3A3 3 0 0 1 3 0Z" fill="#2f80ea"/><path d="M15 3.5V11.5H23.5Z" fill="#fff" opacity=".85"/><path d="M5 15.5L8.5 28L12.8 18.5L17 28L20.8 15.5" fill="none" stroke="#fff" stroke-width="2.3" stroke-linejoin="round" opacity=".8"/></svg>
<svg class="a" style="left:926px;top:978.5px" width="27" height="32" viewBox="0 0 27 32"><path d="M3 0H17L27 10V29A3 3 0 0 1 24 32H3A3 3 0 0 1 0 29V3A3 3 0 0 1 3 0Z" fill="#45cd91"/><path d="M15 3.5V11.5H23.5Z" fill="#fff" opacity=".85"/><path d="M8 15L18 28M18 15L8 28" stroke="#cfe6f2" stroke-width="2" opacity=".8"/></svg>
<svg class="a" style="left:966px;top:978.5px" width="27" height="32" viewBox="0 0 27 32"><path d="M3 0H17L27 10V29A3 3 0 0 1 24 32H3A3 3 0 0 1 0 29V3A3 3 0 0 1 3 0Z" fill="#45cd91"/><path d="M15 3.5V11.5H23.5Z" fill="#fff" opacity=".85"/><path d="M8 15L18 28M18 15L8 28" stroke="#cfe6f2" stroke-width="2" opacity=".8"/></svg>
<svg class="a" style="left:1006px;top:978.5px" width="27" height="32" viewBox="0 0 27 32"><path d="M3 0H17L27 10V29A3 3 0 0 1 24 32H3A3 3 0 0 1 0 29V3A3 3 0 0 1 3 0Z" fill="#2f80ea"/><path d="M15 3.5V11.5H23.5Z" fill="#fff" opacity=".85"/><path d="M5 15.5L8.5 28L12.8 18.5L17 28L20.8 15.5" fill="none" stroke="#fff" stroke-width="2.3" stroke-linejoin="round" opacity=".8"/></svg>
<div class="a" style="left:717px;top:1063px;width:44px;height:44px;border-radius:50%;background:#2f80ed"></div>
<div class="t" style="left:733px;top:1077.1px;font-size:20px;color:#fff;font-weight:normal;letter-spacing:0px;">1</div>
<div class="t" style="left:784px;top:1076.1px;font-size:20px;color:#444;font-weight:normal;letter-spacing:0px;">2</div>
<div class="t" style="left:839px;top:1076.1px;font-size:20px;color:#444;font-weight:normal;letter-spacing:0px;">3</div>
<div class="t" style="left:894px;top:1076.1px;font-size:20px;color:#444;font-weight:normal;letter-spacing:0px;">4</div>
<div class="t" style="left:946px;top:1076.1px;font-size:20px;color:#444;font-weight:normal;letter-spacing:0px;">5</div>
<div class="t" style="left:1000px;top:1076.1px;font-size:20px;color:#444;font-weight:normal;letter-spacing:0px;">6</div>
<div class="a" style="left:1507px;top:266px;width:364px;height:48px;background:#3a8bf4;border-radius:13px"></div>
<div class="a" style="left:1507px;top:322px;width:364px;height:46px;background:#3a8bf4;border-radius:13px"></div>
<div class="a" style="left:1508px;top:378px;width:361px;height:38px;background:#0070a9;"></div>
<div class="t" style="left:1289px;width:800px;text-align:center;top:280.0px;font-size:18.7px;color:#eaf3ff;font-weight:normal;letter-spacing:0.12px;">Nhập thư viện</div>
<div class="t" style="left:1289px;width:800px;text-align:center;top:334.2px;font-size:18.7px;color:#eaf3ff;font-weight:normal;letter-spacing:0.21px;">Nhập thư mục</div>
<div class="t" style="left:1289px;width:800px;text-align:center;top:386.5px;font-size:18.5px;color:#dfeaf2;font-weight:normal;letter-spacing:0.35px;">BỘ LỌC</div>
<div class="a" style="left:1500px;top:472px;width:380px;height:608px;overflow:hidden">
<div class="a" style="left:27px;top:-32px;width:1px;height:700px;background:#555;"></div>
<div class="a" style="left:27px;top:-2px;width:13px;height:1px;background:#666;"></div>
<svg class="a" style="left:48px;top:-9.5px" width="22" height="19" viewBox="0 0 22 19"><path d="M0 2A1.5 1.5 0 0 1 1.5 0.5H8L10 3H20.5A1.5 1.5 0 0 1 22 4.5V16.5A1.5 1.5 0 0 1 20.5 18H1.5A1.5 1.5 0 0 1 0 16.5Z" fill="#0b0b6e"/></svg>
<div class="t" style="left:86px;top:-9.9px;font-size:20.5px;color:#363636;font-weight:normal;letter-spacing:1.00px;-webkit-text-stroke:0.25px #363636">Luật - Nghị Định - Thông</div>
<div class="t" style="left:47px;top:21.1px;font-size:20.5px;color:#363636;font-weight:normal;letter-spacing:-0.62px;-webkit-text-stroke:0.25px #363636">Tư</div>
<div class="a" style="left:27px;top:73px;width:13px;height:1px;background:#666;"></div>
<svg class="a" style="left:48px;top:65.9px" width="22" height="19" viewBox="0 0 22 19"><path d="M0 2A1.5 1.5 0 0 1 1.5 0.5H8L10 3H20.5A1.5 1.5 0 0 1 22 4.5V16.5A1.5 1.5 0 0 1 20.5 18H1.5A1.5 1.5 0 0 1 0 16.5Z" fill="#0b0b6e"/></svg>
<div class="t" style="left:86px;top:65.5px;font-size:20.5px;color:#363636;font-weight:normal;letter-spacing:1.19px;-webkit-text-stroke:0.25px #363636">Quy Định</div>
<div class="a" style="left:47px;top:106px;width:38px;height:30px;background:#5ab8e0;"></div>
<div class="a" style="left:85px;top:106px;width:220px;height:30px;background:#1a7ae8;"></div>
<div class="a" style="left:47px;top:137px;width:54px;height:30px;background:#1a7ae8;"></div>
<div class="a" style="left:101px;top:137px;width:16px;height:30px;background:#5ab8e0;"></div>
<div class="a" style="left:27px;top:118px;width:13px;height:1px;background:#666;"></div>
<svg class="a" style="left:48px;top:110.5px" width="22" height="19" viewBox="0 0 22 19"><path d="M0 2A1.5 1.5 0 0 1 1.5 0.5H8L10 3H20.5A1.5 1.5 0 0 1 22 4.5V16.5A1.5 1.5 0 0 1 20.5 18H1.5A1.5 1.5 0 0 1 0 16.5Z" fill="#0b0b6e"/></svg>
<div class="t" style="left:86px;top:110.1px;font-size:20.5px;color:#fff;font-weight:normal;letter-spacing:1.03px;-webkit-text-stroke:0.25px #fff">Biểu Mẫu ISO 9001 -</div>
<div class="t" style="left:47px;top:141.1px;font-size:20.5px;color:#fff;font-weight:normal;letter-spacing:1.97px;-webkit-text-stroke:0.25px #fff">2015</div>
<div class="a" style="left:27px;top:193px;width:13px;height:1px;background:#666;"></div>
<svg class="a" style="left:48px;top:186.0px" width="22" height="19" viewBox="0 0 22 19"><path d="M0 2A1.5 1.5 0 0 1 1.5 0.5H8L10 3H20.5A1.5 1.5 0 0 1 22 4.5V16.5A1.5 1.5 0 0 1 20.5 18H1.5A1.5 1.5 0 0 1 0 16.5Z" fill="#0b0b6e"/></svg>
<div class="t" style="left:86px;top:185.6px;font-size:20.5px;color:#363636;font-weight:normal;letter-spacing:0.61px;-webkit-text-stroke:0.25px #363636">Sách Điện Tử</div>
<div class="a" style="left:27px;top:237px;width:13px;height:1px;background:#666;"></div>
<svg class="a" style="left:48px;top:230.0px" width="22" height="19" viewBox="0 0 22 19"><path d="M0 2A1.5 1.5 0 0 1 1.5 0.5H8L10 3H20.5A1.5 1.5 0 0 1 22 4.5V16.5A1.5 1.5 0 0 1 20.5 18H1.5A1.5 1.5 0 0 1 0 16.5Z" fill="#0b0b6e"/></svg>
<div class="t" style="left:86px;top:229.6px;font-size:20.5px;color:#363636;font-weight:normal;letter-spacing:0.89px;-webkit-text-stroke:0.25px #363636">Hết hiệu luc</div>
<div class="a" style="left:27px;top:281px;width:13px;height:1px;background:#666;"></div>
<svg class="a" style="left:48px;top:274.0px" width="22" height="19" viewBox="0 0 22 19"><path d="M0 2A1.5 1.5 0 0 1 1.5 0.5H8L10 3H20.5A1.5 1.5 0 0 1 22 4.5V16.5A1.5 1.5 0 0 1 20.5 18H1.5A1.5 1.5 0 0 1 0 16.5Z" fill="#0b0b6e"/></svg>
<div class="t" style="left:86px;top:273.6px;font-size:20.5px;color:#363636;font-weight:normal;letter-spacing:0.92px;-webkit-text-stroke:0.25px #363636">Biên bản họp Giao ban</div>
<div class="a" style="left:27px;top:327px;width:13px;height:1px;background:#666;"></div>
<svg class="a" style="left:48px;top:319.5px" width="22" height="19" viewBox="0 0 22 19"><path d="M0 2A1.5 1.5 0 0 1 1.5 0.5H8L10 3H20.5A1.5 1.5 0 0 1 22 4.5V16.5A1.5 1.5 0 0 1 20.5 18H1.5A1.5 1.5 0 0 1 0 16.5Z" fill="#0b0b6e"/></svg>
<div class="t" style="left:86px;top:319.1px;font-size:20.5px;color:#363636;font-weight:normal;letter-spacing:1.02px;-webkit-text-stroke:0.25px #363636">Danh mục sản phẩm</div>
<div class="a" style="left:27px;top:371px;width:13px;height:1px;background:#666;"></div>
<svg class="a" style="left:48px;top:363.5px" width="22" height="19" viewBox="0 0 22 19"><path d="M0 2A1.5 1.5 0 0 1 1.5 0.5H8L10 3H20.5A1.5 1.5 0 0 1 22 4.5V16.5A1.5 1.5 0 0 1 20.5 18H1.5A1.5 1.5 0 0 1 0 16.5Z" fill="#0b0b6e"/></svg>
<div class="t" style="left:86px;top:363.1px;font-size:20.5px;color:#363636;font-weight:normal;letter-spacing:0.95px;-webkit-text-stroke:0.25px #363636">Danh mục sản phẩm hợp</div>
<div class="t" style="left:47px;top:394.1px;font-size:20.5px;color:#363636;font-weight:normal;letter-spacing:0.88px;-webkit-text-stroke:0.25px #363636">chuẩn hợp quy</div>
<div class="a" style="left:27px;top:446px;width:13px;height:1px;background:#666;"></div>
<svg class="a" style="left:48px;top:438.9px" width="22" height="19" viewBox="0 0 22 19"><path d="M0 2A1.5 1.5 0 0 1 1.5 0.5H8L10 3H20.5A1.5 1.5 0 0 1 22 4.5V16.5A1.5 1.5 0 0 1 20.5 18H1.5A1.5 1.5 0 0 1 0 16.5Z" fill="#0b0b6e"/></svg>
<div class="t" style="left:86px;top:438.5px;font-size:20.5px;color:#363636;font-weight:normal;letter-spacing:1.17px;-webkit-text-stroke:0.25px #363636">Nghị định test</div>
<div class="a" style="left:27px;top:490px;width:13px;height:1px;background:#666;"></div>
<svg class="a" style="left:48px;top:482.5px" width="22" height="19" viewBox="0 0 22 19"><path d="M0 2A1.5 1.5 0 0 1 1.5 0.5H8L10 3H20.5A1.5 1.5 0 0 1 22 4.5V16.5A1.5 1.5 0 0 1 20.5 18H1.5A1.5 1.5 0 0 1 0 16.5Z" fill="#0b0b6e"/></svg>
<div class="t" style="left:86px;top:482.1px;font-size:20.5px;color:#363636;font-weight:normal;letter-spacing:0.77px;-webkit-text-stroke:0.25px #363636">clip hài</div>
<div class="a" style="left:27px;top:534px;width:13px;height:1px;background:#666;"></div>
<svg class="a" style="left:48px;top:526.5px" width="22" height="19" viewBox="0 0 22 19"><path d="M0 2A1.5 1.5 0 0 1 1.5 0.5H8L10 3H20.5A1.5 1.5 0 0 1 22 4.5V16.5A1.5 1.5 0 0 1 20.5 18H1.5A1.5 1.5 0 0 1 0 16.5Z" fill="#0b0b6e"/></svg>
<div class="t" style="left:86px;top:526.1px;font-size:20.5px;color:#363636;font-weight:normal;letter-spacing:0.82px;-webkit-text-stroke:0.25px #363636">BÀI KIỂM TRA</div>
<div class="a" style="left:27px;top:579px;width:13px;height:1px;background:#666;"></div>
<svg class="a" style="left:48px;top:571.5px" width="22" height="19" viewBox="0 0 22 19"><path d="M0 2A1.5 1.5 0 0 1 1.5 0.5H8L10 3H20.5A1.5 1.5 0 0 1 22 4.5V16.5A1.5 1.5 0 0 1 20.5 18H1.5A1.5 1.5 0 0 1 0 16.5Z" fill="#0b0b6e"/></svg>
<div class="t" style="left:86px;top:571.1px;font-size:20.5px;color:#363636;font-weight:normal;letter-spacing:1.00px;-webkit-text-stroke:0.25px #363636">Biểu mẫu giành cho nhân</div>
<div class="t" style="left:47px;top:602.1px;font-size:20.5px;color:#363636;font-weight:normal;letter-spacing:2.08px;-webkit-text-stroke:0.25px #363636">viên mới</div>
</div>
<div class="a" style="left:1508px;top:429px;width:361px;height:43px;background:#c3dbf8;border-radius:4px 4px 0 0"></div>
<div class="t" style="left:1534.5px;top:438.2px;font-size:20.5px;color:#4a5583;font-weight:normal;letter-spacing:0.87px;">Mục thư viện</div>
<div class="a" style="left:1857px;top:738px;width:12px;height:320px;background:#ced4da;border-radius:6px"></div>
<div class="a" style="left:1844px;top:978px;width:40px;height:40px;border-radius:50%;background:#f7931e"></div>
<div class="a" style="left:1844px;top:1028px;width:40px;height:40px;border-radius:50%;background:#f7931e"></div>
<svg class="a" style="left:1856px;top:992px" width="16" height="10" viewBox="0 0 16 10"><path d="M2 8C4 4 6 2 8 2S12 4 14 8Z" fill="#fff"/></svg>
<svg class="a" style="left:1856px;top:1042px" width="16" height="10" viewBox="0 0 16 10"><path d="M2 2C4 6 6 8 8 8S12 6 14 2Z" fill="#fff"/></svg>
<svg class="a" style="left:1269px;top:722px" width="24" height="34" viewBox="0 0 24 34"><path d="M6.5 17V4C6.5 1 11 1 11 4V10.5C11 8.8 14.5 8.8 14.5 10.5V11.5C14.5 9.8 18 9.8 18 11.5V12.5C18 10.8 21.5 10.8 21.5 12.5V21C21.5 27.5 18 32 13 32C9 32 7 29.5 5 26L1.5 20C0.5 18 2.5 16.5 4 18L6.5 20Z" fill="#fff" stroke="#444" stroke-width="1.5" stroke-linejoin="round"/><path d="M8 3.5V15" stroke="#aaa" stroke-width="2.5"/></svg>
</body></html>
